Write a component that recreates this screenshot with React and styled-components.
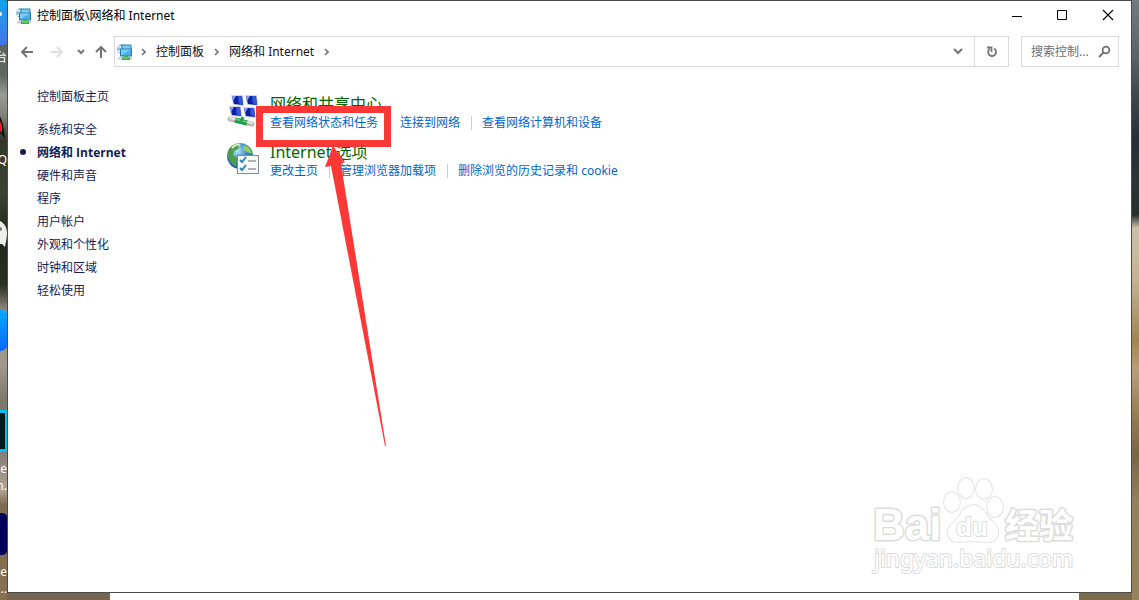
import React from "react";
import styled, { createGlobalStyle } from "styled-components";

const Global = createGlobalStyle`
  * { box-sizing: border-box; }
  body { margin: 0; }
  body, button, input {
    font-family: "Noto Sans", "Noto Sans CJK SC", sans-serif;
    font-size: 12px;
    line-height: 16px;
  }
`;

const Desktop = styled.div`
  position: relative;
  min-height: 100vh;
  display: flex;
  flex-direction: column;
  padding: 0 7px 0 7px;
  overflow: hidden;
  background:
    linear-gradient(#707c7e 0, #5c686c 50px, #3b464b 100px, #262f37 140px, #2a3534 180px, #26302e 215px, #cdc0aa 228px, #c4b294 280px, #a08654 340px, #b99e7a 370px, #917a52 420px, #7a6549 455px, #93805f 500px, #95825c 600px) right / 8px 100% no-repeat,
    linear-gradient(#5d6660 0, #5d6660 75px, #9a9c96 95px, #7c7d74 118px, #33372a 140px, #3d4232 190px, #20261a 240px, #2b3022 285px, #8f897d 310px, #a39a8c 365px, #7b7868 400px, #86807a 455px, #b2a392 490px, #7e6a50 505px, #86714f 600px);
`;

const Shortcut = styled.div`
  position: absolute;
  left: 0;
  top: ${(p) => p.$top}px;
  width: 8px;
  height: ${(p) => p.$height}px;
  background: ${(p) => p.$fill};
  border: ${(p) => p.$border || "none"};
  border-left: none;
  border-radius: 0 ${(p) => p.$radius || 0}px ${(p) => p.$radius || 0}px 0;
`;

const ShortcutLabel = styled.span`
  position: absolute;
  left: 0;
  top: ${(p) => p.$top}px;
  width: 7px;
  display: flex;
  justify-content: flex-end;
  white-space: nowrap;
  color: #fff;
`;

const ShortcutArt = styled.svg`
  position: absolute;
  left: 0;
  top: ${(p) => p.$top}px;
`;

const Window = styled.div`
  position: relative;
  flex: 1;
  display: flex;
  flex-direction: column;
  background: #fff;
  border: 1px solid #4b4b49;
`;

const TitleBar = styled.header`
  display: flex;
  align-items: center;
  height: 30px;
  padding-left: 8px;
`;

const Title = styled.h1`
  flex: 1;
  margin: 0 0 0 5px;
  font-size: 12px;
  font-weight: 400;
  color: #000;
`;

const CaptionButton = styled.button`
  display: flex;
  align-items: center;
  justify-content: center;
  width: 46px;
  height: 30px;
  padding: 0;
  border: 0;
  background: none;
`;

const Toolbar = styled.div`
  display: flex;
  align-items: center;
  padding: 5px 12px 0 8px;
`;

const NavButton = styled.button`
  display: flex;
  align-items: center;
  justify-content: center;
  width: ${(p) => p.$width}px;
  height: 30px;
  padding: 0;
  border: 0;
  background: none;
`;

const AddressBar = styled.nav`
  flex: 1;
  display: flex;
  align-items: center;
  height: 31px;
  padding-left: 2px;
  border: 1px solid #d9d9d9;
`;

const Crumb = styled.a`
  margin: 0 2px 0 1px;
  color: #111;
  text-decoration: none;
`;

const CrumbArrow = styled.svg`
  flex: none;
  margin: 0 9px 0 8px;
`;

const RefreshButton = styled(NavButton)`
  border-left: 1px solid #d9d9d9;
`;

const Spacer = styled.div`
  flex: 1;
`;

const SearchBox = styled.label`
  display: flex;
  align-items: center;
  width: 98px;
  height: 31px;
  margin-left: 12px;
  padding: 0 7px 0 9px;
  border: 1px solid #d9d9d9;
`;

const SearchInput = styled.input`
  flex: 1;
  min-width: 0;
  padding: 0;
  border: 0;
  outline: 0;
  background: none;
  &::placeholder { color: #6d6d6d; opacity: 1; }
`;

const Body = styled.div`
  flex: 1;
  display: flex;
  padding: 18px 16px 24px 29px;
`;

const Sidebar = styled.nav`
  width: 190px;
`;

const SideLink = styled.a`
  position: relative;
  display: block;
  width: max-content;
  line-height: 23px;
  color: #151c55;
  text-decoration: none;
  font-family: "Open Sans", "Noto Sans CJK SC", sans-serif;
  font-weight: ${(p) => (p.$current ? 700 : 400)};
  &::before {
    content: "";
    display: ${(p) => (p.$current ? "block" : "none")};
    position: absolute;
    left: -17px;
    top: 8px;
    width: 6px;
    height: 6px;
    border-radius: 3px;
    background: #151c55;
  }
`;

const SideList = styled.ul`
  list-style: none;
  margin: 10px 0 0;
  padding: 0;
`;

const Categories = styled.main`
  flex: 1;
  padding-top: 9px;
`;

const Category = styled.section`
  display: flex;
  height: 48px;
`;

const CategoryText = styled.div`
  margin-left: 11px;
`;

const CategoryTitle = styled.h2`
  margin: 0;
  font-size: 16px;
  line-height: 20px;
  font-weight: 400;
`;

const TitleLink = styled.a`
  color: #006600;
  text-decoration: none;
`;

const Tasks = styled.ul`
  display: flex;
  list-style: none;
  margin: 2px 0 0;
  padding: 0;
`;

const Task = styled.li`
  line-height: 14px;
  & + & {
    margin-left: 11px;
    padding-left: 10px;
    border-left: 1px solid #ccc;
  }
`;

const TaskLink = styled.a`
  color: #0066cc;
  text-decoration: none;
`;

const Annotation = styled.svg`
  position: absolute;
  left: 248px;
  top: 105px;
  pointer-events: none;
`;

const Watermark = styled.svg`
  position: absolute;
  right: 48px;
  bottom: 13px;
`;

const Taskbar = styled.footer`
  height: 7px;
  margin: 0 53px 0 103px;
  background: #fff;
  box-shadow: -103px 0 0 #776452, 53px 0 0 #7d6b4e;
`;

const NetworkIcon = () => (
  <svg width="16" height="16" viewBox="0 0 16 16" aria-hidden="true">
    <circle cx="5" cy="5" r="5" fill="#8dbfd8" />
    <path d="M1 3c2-1 3 0 3 2S2 7 1 8M5 0l2 2" stroke="#e2f1f4" strokeWidth="1.4" fill="none" />
    <rect x="5" y="1" width="9" height="6" fill="#7ccbf5" stroke="#2b83b8" />
    <rect x="3.5" y="5" width="11" height="7" fill="#48adee" stroke="#2779ad" />
    <path d="M4 5.500h10L4 11z" fill="#80cdf8" />
    <rect x="1" y="13.500" width="14" height="2" fill="#c4cbc9" />
    <path d="M7 12h4v1h2v3H5v-3h2z" fill="#3fae46" />
    <path d="M6 14h6" stroke="#8be08c" />
  </svg>
);

const Screen = ({ x, y }) => (
  <g transform={`translate(${x} ${y})`}>
    <path d="M1 0h12l1 11-11-1z" fill="#d3d6de" />
    <path d="M2 1h10l1 9-9-1z" fill="#0b1fa0" />
    <path d="M8 1h4l1 9-3-1c-3-2-1-5-2-8z" fill="#3157dc" />
    <path d="M2 1h4L3 6z" fill="#7f9ef0" />
  </g>
);

const SharingIcon = () => (
  <svg width="32" height="34" viewBox="0 0 32 34" aria-hidden="true">
    <Screen x={3} y={1} />
    <Screen x={17} y={1} />
    <Screen x={1} y={12} />
    <Screen x={15} y={13} />
    <path d="M3 25l22 5" stroke="#b4bbb9" strokeWidth="5" strokeLinecap="round" />
    <path d="M3 24l22 5" stroke="#e5e9e8" strokeWidth="2" strokeLinecap="round" />
    <path d="M8 26l12 3" stroke="#239c49" strokeWidth="5" />
    <path d="M8 25l12 3" stroke="#61cf7d" strokeWidth="1.5" />
    <path d="M14 27l2-4" stroke="#239c49" strokeWidth="3" />
  </svg>
);

const OptionsIcon = () => (
  <svg width="32" height="34" viewBox="0 0 32 34" aria-hidden="true">
    <defs>
      <radialGradient id="globe" cx="0.4" cy="0.3" r="0.7">
        <stop offset="0" stopColor="#b6e5f5" />
        <stop offset="0.5" stopColor="#438fc9" />
        <stop offset="1" stopColor="#134c8d" />
      </radialGradient>
    </defs>
    <circle cx="13" cy="14" r="13" fill="url(#globe)" />
    <path d="M2 7c3-4 7-6 10-5l-1 5-4 2-1 4 4 3-1 9C4 22-1 15 2 7z" fill="#4f9d4a" />
    <path d="M17 3c4 1 7 4 8 9l-5-2-4-3z" fill="#8fd158" />
    <path d="M5 6c3-3 6-4 8-3" stroke="#d4f0b5" strokeWidth="2" fill="none" />
    <rect x="10.5" y="13.5" width="21" height="18" fill="#f7f9fa" stroke="#818b91" />
    <path d="M13 18l2 2 4-5M13 26l2 2 4-5" stroke="#2586bd" strokeWidth="2" fill="none" />
    <path d="M21 19h8M21 27h8" stroke="#9298a0" strokeWidth="1.5" />
  </svg>
);

const Arrow = ({ d, width = 14, height = 14, color = "#757575", stroke = 2 }) => (
  <svg width={width} height={height} viewBox={`0 0 ${width} ${height}`} aria-hidden="true">
    <path d={d} fill="none" stroke={color} strokeWidth={stroke} />
  </svg>
);

const Chevron = () => (
  <CrumbArrow width="5" height="8" viewBox="0 0 5 8" aria-hidden="true">
    <path d="M1 1l3 3-3 3" fill="none" stroke="#777" strokeWidth="1.700" />
  </CrumbArrow>
);

const sideItems = ["系统和安全", "网络和 Internet", "硬件和声音", "程序", "用户帐户", "外观和个性化", "时钟和区域", "轻松使用"];

const categories = [
  { title: "网络和共享中心", Icon: SharingIcon, tasks: ["查看网络状态和任务", "连接到网络", "查看网络计算机和设备"] },
  { title: "Internet 选项", Icon: OptionsIcon, tasks: ["更改主页", "管理浏览器加载项", "删除浏览的历史记录和 cookie"] },
];

export default function App() {
  return (
    <Desktop>
      <Global />
      <Shortcut $top={0} $height={45} $radius={5} $fill="linear-gradient(#12a5ea, #4474ea)" />
      <ShortcutArt $top={11} width="3" height="7" viewBox="0 0 3 7"><circle cx="0" cy="3" r="2" fill="#fff" /></ShortcutArt>
      <ShortcutLabel $top={50}>平台</ShortcutLabel>
      <ShortcutArt $top={116} width="7" height="24" viewBox="0 0 7 24">
        <path d="M0 0l3 8 2 14-5-5z" fill="#111" />
        <path d="M0 5l2 4v8l-2-2z" fill="#e3211c" />
      </ShortcutArt>
      <ShortcutLabel $top={152}>Q</ShortcutLabel>
      <ShortcutArt $top={221} width="7" height="27" viewBox="0 0 7 27">
        <path d="M0 0c4 2 7 6 7 12 0 5-1 8-2 14l-3-3-2 0z" fill="#ededed" />
        <circle cx="0" cy="8" r="2" fill="#777" />
      </ShortcutArt>
      <Shortcut $top={309} $height={42} $radius={8} $fill="linear-gradient(#08aaff, #0868ff)" />
      <Shortcut $top={410} $height={42} $fill="#02181c" $border="3px solid #08bff2" />
      <ShortcutLabel $top={461}>e</ShortcutLabel>
      <ShortcutLabel $top={478}>n.</ShortcutLabel>
      <Shortcut $top={513} $height={42} $radius={6} $fill="#00005a" />
      <ShortcutLabel $top={564}>e</ShortcutLabel>
      <ShortcutLabel $top={581}>...</ShortcutLabel>

      <Window>
        <TitleBar>
          <NetworkIcon />
          <Title>控制面板\网络和 Internet</Title>
          <CaptionButton aria-label="最小化"><Arrow d="M3 7.5h10" color="#000" stroke={1} /></CaptionButton>
          <CaptionButton aria-label="最大化"><Arrow d="M2.5 1.5h9v9h-9z" color="#000" stroke={1} /></CaptionButton>
          <CaptionButton aria-label="关闭"><Arrow d="M2 1l10 10M12 1L2 11" color="#000" stroke={1.1} /></CaptionButton>
        </TitleBar>
        <Toolbar>
          <NavButton $width={22} aria-label="后退"><Arrow d="M13 7H2M7 2L2 7l5 5" /></NavButton>
          <NavButton $width={37} aria-label="前进"><Arrow d="M1 7h11M7 2l5 5-5 5" color="#dcdcdc" /></NavButton>
          <NavButton $width={12} aria-label="最近的位置"><Arrow width={8} height={6} d="M1 1l3 3 3-3" /></NavButton>
          <NavButton $width={27} aria-label="向上"><Arrow d="M7 13V2M2 7l5-5 5 5" /></NavButton>
          <AddressBar aria-label="地址">
            <NetworkIcon />
            <Chevron />
            <Crumb href="#panel">控制面板</Crumb>
            <Chevron />
            <Crumb href="#network">网络和 Internet</Crumb>
            <Chevron />
            <Spacer />
            <NavButton $width={33} aria-label="展开"><Arrow width={10} height={7} d="M1 1l4 4 4-4" /></NavButton>
            <RefreshButton $width={34} aria-label="刷新">
              <Arrow d="M9 3.500A4 4 0 1 1 4.500 4M2 2.500h4.500v4.500" stroke={1.8} />
            </RefreshButton>
          </AddressBar>
          <SearchBox>
            <SearchInput type="text" placeholder="搜索控制..." aria-label="搜索控制面板" />
            <svg width="13" height="13" viewBox="0 0 13 13" aria-hidden="true">
              <circle cx="8" cy="5" r="3.4" fill="none" stroke="#707070" strokeWidth="1.8" />
              <path d="M5.5 7.5L1 12" stroke="#707070" strokeWidth="2" />
            </svg>
          </SearchBox>
        </Toolbar>
        <Body>
          <Sidebar aria-label="控制面板类别">
            <SideLink href="#home">控制面板主页</SideLink>
            <SideList>
              {sideItems.map((name, i) => (
                <li key={name}><SideLink href={`#item${i}`} $current={i === 1}>{name}</SideLink></li>
              ))}
            </SideList>
          </Sidebar>
          <Categories>
            {categories.map(({ title, Icon, tasks }) => (
              <Category key={title}>
                <Icon />
                <CategoryText>
                  <CategoryTitle><TitleLink href="#category">{title}</TitleLink></CategoryTitle>
                  <Tasks>
                    {tasks.map((task) => <Task key={task}><TaskLink href="#task">{task}</TaskLink></Task>)}
                  </Tasks>
                </CategoryText>
              </Category>
            ))}
          </Categories>
        </Body>

        <Annotation width="140" height="345" viewBox="0 0 140 345" aria-hidden="true">
          <rect x="3.5" y="3.5" width="128" height="34" fill="none" stroke="#fd3837" strokeWidth="7" />
          <path d="M77 40L89 56l-4 2 45 282h-1L75 60l-6 1z" fill="#fd3837" />
        </Annotation>

        <Watermark width="212" height="108" viewBox="0 0 212 108">
          <g fill="#fff" stroke="#dcdcdc" strokeWidth="3" paintOrder="stroke" strokeLinejoin="round">
            <text x="2" y="69" fontFamily="Liberation Sans" fontWeight="700" fontSize="44">Bai</text>
            <g strokeWidth="1.5">
              <ellipse cx="81" cy="31" rx="8" ry="10" />
              <ellipse cx="95" cy="17" rx="8" ry="10" />
              <ellipse cx="113" cy="18" rx="8" ry="10" />
              <ellipse cx="124" cy="36" rx="8" ry="10" />
              <path d="M102 34c-11 0-12 12-20 18-10 8-5 20 7 19 8-1 18-1 26 0 13 1 16-11 8-19-8-6-10-18-21-18z" />
            </g>
            <text x="85" y="65" fontFamily="Liberation Sans" fontWeight="700" fontSize="26" strokeWidth="2">du</text>
            <text x="134" y="67" fontFamily="Noto Sans CJK SC" fontWeight="700" fontSize="34">经验</text>
            <text x="3" y="96" fontFamily="Noto Sans" fontSize="23" strokeWidth="2">jingyan.baidu.com</text>
          </g>
        </Watermark>
      </Window>
      <Taskbar />
    </Desktop>
  );
}
